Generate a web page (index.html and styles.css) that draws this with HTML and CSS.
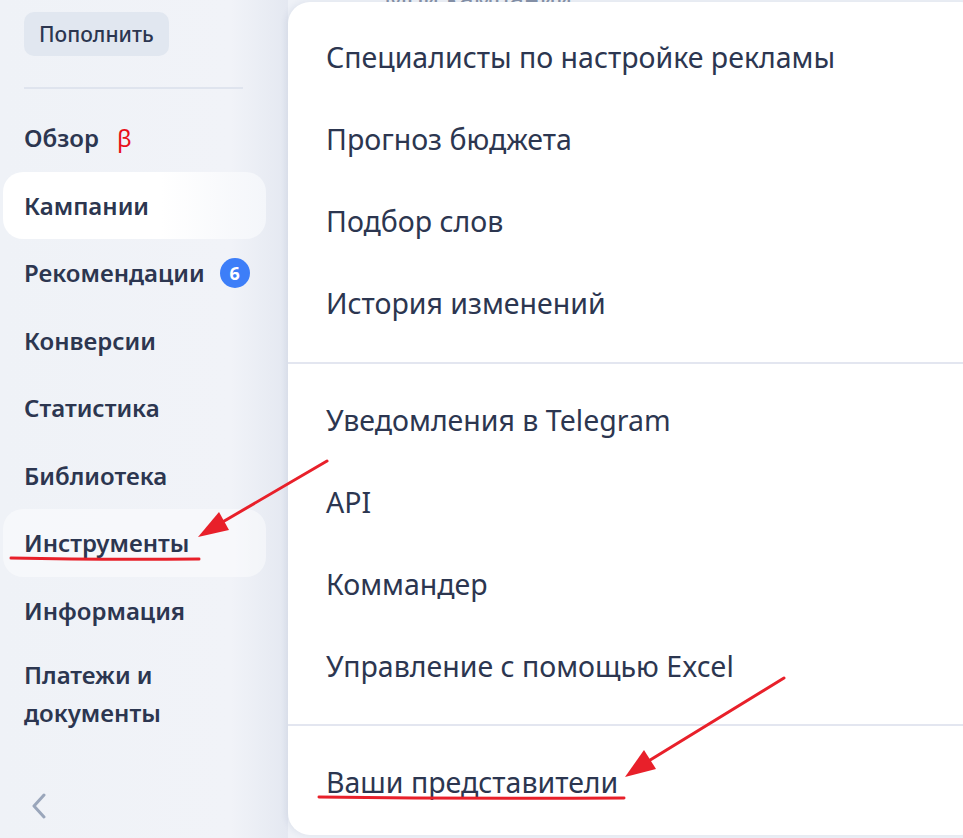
FILE: index.html
```html
<!DOCTYPE html>
<html>
<head>
  <title>Инструменты</title>
  <link rel="stylesheet" href="styles.css">
</head>
<body>
  <div class="page">
    <nav class="sidebar">
      <button type="button" class="topup">Пополнить</button>
      <div class="side-divider"></div>
      <ul class="nav">
        <li class="nav-item">Обзор <span class="beta">β</span></li>
        <li class="nav-item active">Кампании</li>
        <li class="nav-item">Рекомендации <span class="badge">6</span></li>
        <li class="nav-item">Конверсии</li>
        <li class="nav-item">Статистика</li>
        <li class="nav-item">Библиотека</li>
        <li class="nav-item hover">Инструменты</li>
        <li class="nav-item">Информация</li>
        <li class="nav-item two-line">Платежи и<br>документы</li>
      </ul>
      <div class="collapse">
        <svg width="16" height="26" viewBox="0 0 16 26"><path d="M13 2 L3 13 L13 24" fill="none" stroke="#9aa6bb" stroke-width="3" stroke-linecap="round" stroke-linejoin="round"/></svg>
      </div>
    </nav>
    <main class="content">
      <div class="behind">Мои кампании</div>
    </main>
  </div>

  <div class="menu">
    <ul class="menu-group first">
      <li>Специалисты по настройке рекламы</li>
      <li>Прогноз бюджета</li>
      <li>Подбор слов</li>
      <li>История изменений</li>
    </ul>
    <ul class="menu-group">
      <li>Уведомления в Telegram</li>
      <li>API</li>
      <li>Коммандер</li>
      <li>Управление с помощью Excel</li>
    </ul>
    <ul class="menu-group last">
      <li>Ваши представители</li>
    </ul>
  </div>

  <svg class="marks" width="963" height="838" viewBox="0 0 963 838">
    <g stroke="#e8202a" stroke-width="3" stroke-linecap="round" fill="none">
      <line x1="327" y1="461" x2="214" y2="527"/>
      <path d="M11 558 Q100 560 199 559"/>
      <line x1="784" y1="678" x2="642" y2="765"/>
      <path d="M319 797 Q470 799 624 798"/>
    </g>
    <g fill="#e8202a">
      <polygon points="198,537 219,512 229,530"/>
      <polygon points="625,777 644,750 656,769"/>
    </g>
  </svg>
</body>
</html>
```

FILE: styles.css
```css
body {
  margin: 0;
  font-family: "Noto Sans", Arial, sans-serif;
  color: #2c3650;
  background-color: #eef1f7;
  overflow: hidden;
}
ul {
  list-style: none;
  margin: 0;
  padding: 0;
}
.page {
  display: flex;
  width: 963px;
  height: 838px;
}
.sidebar {
  width: 288px;
  flex: none;
  box-sizing: border-box;
  padding: 12px 22px 0 3px;
  background: linear-gradient(90deg, #eff2f7 0%, #f1f3f8 80%, #e4e8f1 100%);
  display: flex;
  flex-direction: column;
}
.topup {
  align-self: flex-start;
  margin-left: 21px;
  height: 44px;
  padding: 0 15px;
  border: none;
  border-radius: 10px;
  background-color: #e1e7f0;
  color: #2c3650;
  font-family: inherit;
  font-size: 21px;
  font-weight: 500;
}
.side-divider {
  height: 2px;
  margin: 31px 0 0 21px;
  width: 219px;
  background-color: #dfe4ee;
}
.nav {
  margin-top: 15px;
}
.nav-item {
  height: 67.5px;
  display: flex;
  align-items: center;
  padding-left: 21px;
  border-radius: 20px;
  font-size: 24px;
  font-weight: 600;
}
.nav-item.active {
  background: linear-gradient(90deg, #ffffff 0%, #ffffff 60%, #f4f6fa 100%);
}
.nav-item.hover {
  background-color: rgba(255, 255, 255, 0.45);
}
.nav-item.two-line {
  height: auto;
  padding-top: 12px;
  line-height: 38px;
}
.beta {
  color: #e8101a;
  font-weight: 400;
  margin-left: 18px;
}
.badge {
  display: inline-flex;
  align-items: center;
  justify-content: center;
  width: 30px;
  height: 30px;
  margin-left: 15px;
  border-radius: 50%;
  background-color: #3d7ef8;
  color: #ffffff;
  font-size: 18px;
  font-weight: 700;
}
.collapse {
  margin-top: auto;
  margin-bottom: 14px;
  padding-left: 28px;
}
.content {
  flex: 1;
  position: relative;
}
.behind {
  margin: -20px 0 0 96px;
  font-size: 26px;
  color: #8792a8;
}
.menu {
  position: absolute;
  left: 288px;
  top: 2px;
  width: 695px;
  height: 833px;
  background-color: #ffffff;
  border-radius: 22px;
  box-shadow: -2px 0 6px rgba(40, 60, 110, 0.08);
}
.menu-group {
  padding: 15px 0 17px;
  border-bottom: 2px solid #e3e6f0;
}
.menu-group.first {
  padding: 14px 0 18px;
}
.menu-group.last {
  border-bottom: none;
  padding-top: 15px;
}
.menu-group li {
  height: 82px;
  display: flex;
  align-items: center;
  padding-left: 38px;
  font-size: 28.5px;
}
.marks {
  position: absolute;
  left: 0;
  top: 0;
  pointer-events: none;
}
```
